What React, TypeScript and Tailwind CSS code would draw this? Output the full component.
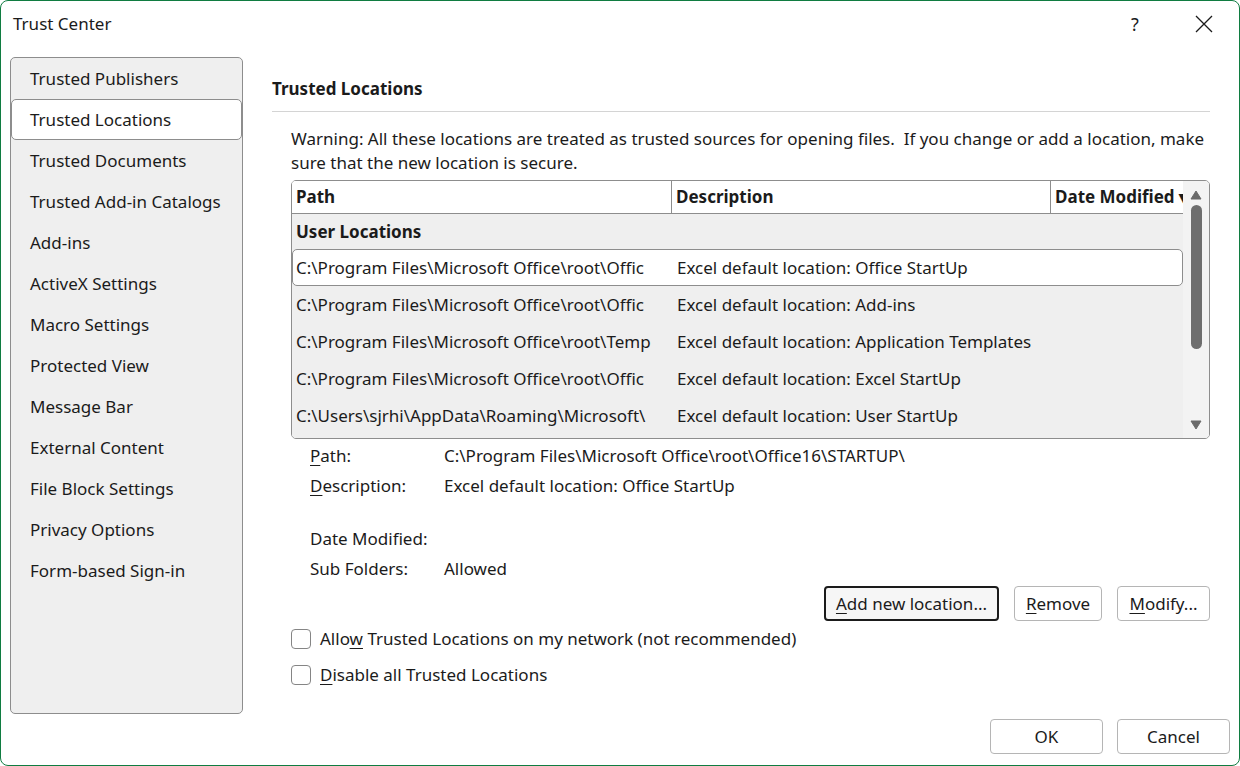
const navItems = [
  'Trusted Publishers',
  'Trusted Locations',
  'Trusted Documents',
  'Trusted Add-in Catalogs',
  'Add-ins',
  'ActiveX Settings',
  'Macro Settings',
  'Protected View',
  'Message Bar',
  'External Content',
  'File Block Settings',
  'Privacy Options',
  'Form-based Sign-in',
]

const rows = [
  { path: 'C:\\Program Files\\Microsoft Office\\root\\Offic', desc: 'Excel default location: Office StartUp' },
  { path: 'C:\\Program Files\\Microsoft Office\\root\\Offic', desc: 'Excel default location: Add-ins' },
  { path: 'C:\\Program Files\\Microsoft Office\\root\\Temp', desc: 'Excel default location: Application Templates' },
  { path: 'C:\\Program Files\\Microsoft Office\\root\\Offic', desc: 'Excel default location: Excel StartUp' },
  { path: 'C:\\Users\\sjrhi\\AppData\\Roaming\\Microsoft\\', desc: 'Excel default location: User StartUp' },
]

const font = { fontFamily: '"Noto Sans", "Open Sans", sans-serif' }

function App() {
  return (
    <div className="w-[1240px] h-[766px] bg-white text-[#1b1b1b] text-[17px]" style={font}>
      <div className="w-full h-full border border-[#107c41] rounded-lg flex flex-col overflow-hidden">
        <TitleBar />
        <div className="flex flex-1 pl-[9px] pr-[29px]">
          <Sidebar />
          <Main />
        </div>
      </div>
    </div>
  )
}

export default App

const TitleBar = () => (
  <div className="h-[46px] flex items-center pl-3 shrink-0">
    <span className="text-[17px]">Trust Center</span>
    <span className="ml-auto text-[18px] w-[20px] text-center mr-[50px]">?</span>
    <svg width="18" height="18" viewBox="0 0 18 18" className="mr-[26px]">
      <path d="M1 1 L17 17 M17 1 L1 17" stroke="#1b1b1b" strokeWidth="1.3" />
    </svg>
  </div>
)

const Sidebar = () => (
  <div className="w-[233px] shrink-0 mt-[10px] h-[657px] bg-[#efefef] border border-[#8d8d8d] rounded-[5px] flex flex-col">
    {navItems.map((item) =>
      item === 'Trusted Locations' ? (
        <div key={item} className="h-[41px] shrink-0 bg-white border border-[#8d8d8d] rounded-[5px] flex items-center pl-[18px]">
          {item}
        </div>
      ) : (
        <div key={item} className="h-[41px] shrink-0 flex items-center pl-[19px]">
          {item}
        </div>
      )
    )}
  </div>
)

const U = ({ children }: { children: string }) => <span className="underline underline-offset-[3px]">{children}</span>

const Main = () => (
  <div className="flex-1 min-w-0 ml-[29px] flex flex-col">
    <div className="h-[20px]" />
    <h2 className="font-bold h-[45px] flex items-center border-b border-[#d4d4d4]">Trusted Locations</h2>
    <div className="pl-[19px] flex flex-col">
      <p className="mt-[15px] leading-[24px]">
        Warning: All these locations are treated as trusted sources for opening files.&nbsp; If you change or add a location, make sure that the new location is secure.
      </p>
      <Table />
      <Details />
      <div className="flex justify-end gap-[15px] mt-[2px]">
        <button className="w-[175px] h-[35px] bg-[#f6f6f6] border-2 border-[#1b1b1b] rounded-[4px]">
          <U>A</U>dd new location...
        </button>
        <button className="w-[88px] h-[35px] bg-white border border-[#b5b5b5] rounded-[4px]">
          <U>R</U>emove
        </button>
        <button className="w-[93px] h-[35px] bg-white border border-[#b5b5b5] rounded-[4px]">
          <U>M</U>odify...
        </button>
      </div>
      <div className="flex flex-col gap-[14px] mt-[7px]">
        <Check><>Allo<U>w</U> Trusted Locations on my network (not recommended)</></Check>
        <Check><><U>D</U>isable all Trusted Locations</></Check>
      </div>
    </div>
    <div className="flex justify-end gap-[14px] mt-auto mb-[11px] -mr-[20px]">
      <button className="w-[113px] h-[35px] bg-white border border-[#b5b5b5] rounded-[4px]">OK</button>
      <button className="w-[113px] h-[35px] bg-white border border-[#b5b5b5] rounded-[4px]">Cancel</button>
    </div>
  </div>
)

const Check = ({ children }: { children: React.ReactNode }) => (
  <label className="flex items-center gap-[9px] h-[22px]">
    <span className="w-[20px] h-[20px] border border-[#858585] rounded-[4px] bg-white" />
    <span>{children}</span>
  </label>
)

const Table = () => (
  <div className="mt-[5px] h-[259px] border border-[#8d8d8d] rounded-[5px] flex overflow-hidden">
    <div className="flex-1 min-w-0 flex flex-col bg-[#efefef]">
      <div className="h-[33px] flex bg-white border-b border-[#8d8d8d] font-bold">
        <div className="w-[380px] shrink-0 border-r border-[#8d8d8d] flex items-center pl-[4px]">Path</div>
        <div className="w-[379px] shrink-0 border-r border-[#8d8d8d] flex items-center pl-[4px]">Description</div>
        <div className="flex-1 min-w-0 flex items-center pl-[4px] whitespace-nowrap overflow-hidden">Date Modified ▾</div>
      </div>
      <div className="h-[35px] flex items-center pl-[4px] font-bold">User Locations</div>
      {rows.map((r, i) => (
        <div
          key={i}
          className={
            i === 0
              ? 'h-[37px] flex items-center bg-white border border-[#8d8d8d] rounded-[5px] whitespace-nowrap'
              : 'h-[37px] flex items-center border border-transparent whitespace-nowrap'
          }
        >
          <div className="w-[380px] shrink-0 pl-[3px] overflow-hidden">{r.path}</div>
          <div className="pl-[4px] overflow-hidden">{r.desc}</div>
        </div>
      ))}
    </div>
    <div className="w-[26px] shrink-0 bg-[#f3f3f3] flex flex-col items-center">
      <svg width="12" height="10" viewBox="0 0 12 10" className="mt-[9px]">
        <path d="M6 1 L11 9 L1 9 Z" fill="#6b6b6b" stroke="#6b6b6b" strokeLinejoin="round" />
      </svg>
      <div className="w-[11px] h-[144px] bg-[#6e6e6e] rounded-full mt-[5px]" />
      <svg width="12" height="10" viewBox="0 0 12 10" className="mt-auto mb-[8px]">
        <path d="M1 1 L11 1 L6 9 Z" fill="#6b6b6b" stroke="#6b6b6b" strokeLinejoin="round" />
      </svg>
    </div>
  </div>
)

const Details = () => (
  <div className="mt-[2px] pl-[19px] grid grid-cols-[134px_1fr]">
    <div className="h-[30px] flex items-center"><U>P</U>ath:</div>
    <div className="h-[30px] flex items-center">C:\Program Files\Microsoft Office\root\Office16\STARTUP\</div>
    <div className="h-[30px] flex items-center"><U>D</U>escription:</div>
    <div className="h-[30px] flex items-center">Excel default location: Office StartUp</div>
    <div className="h-[23px]" />
    <div className="h-[23px]" />
    <div className="h-[30px] flex items-center">Date Modified:</div>
    <div className="h-[30px]" />
    <div className="h-[30px] flex items-center">Sub Folders:</div>
    <div className="h-[30px] flex items-center">Allowed</div>
  </div>
)
